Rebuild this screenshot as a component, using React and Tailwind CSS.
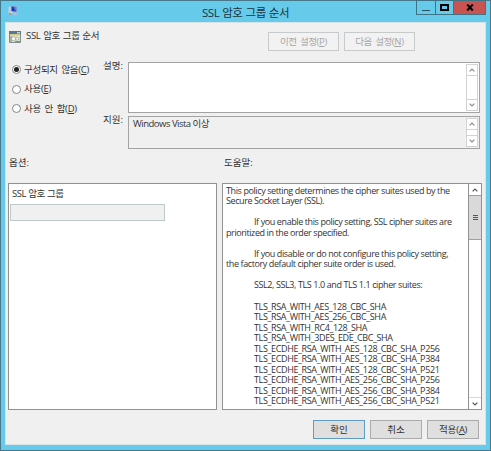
import clsx from 'clsx';

const suites = [
  'TLS_RSA_WITH_AES_128_CBC_SHA',
  'TLS_RSA_WITH_AES_256_CBC_SHA',
  'TLS_RSA_WITH_RC4_128_SHA',
  'TLS_RSA_WITH_3DES_EDE_CBC_SHA',
  'TLS_ECDHE_RSA_WITH_AES_128_CBC_SHA_P256',
  'TLS_ECDHE_RSA_WITH_AES_128_CBC_SHA_P384',
  'TLS_ECDHE_RSA_WITH_AES_128_CBC_SHA_P521',
  'TLS_ECDHE_RSA_WITH_AES_256_CBC_SHA_P256',
  'TLS_ECDHE_RSA_WITH_AES_256_CBC_SHA_P384',
  'TLS_ECDHE_RSA_WITH_AES_256_CBC_SHA_P521'
];

const Chevron = ({ down, muted }) => (
  <svg viewBox="0 0 6 4" className={clsx('h-1 w-1.5', down && 'rotate-180')}>
    <path d="M.6 3.4 3 1l2.4 2.4" fill="none" stroke={muted ? '#8c8c8c' : '#555'} strokeWidth="1.2" />
  </svg>
);

const Key = ({ children }) => (
  <span className="tracking-[-0.3px]">
    (<span className="underline underline-offset-1">{children}</span>)
  </span>
);

const MiniScroll = () => (
  <div className="flex w-3 flex-col justify-between border border-[#d2d2d2] bg-white">
    <span className="flex h-[11px] items-center justify-center border-b border-[#d2d2d2]">
      <Chevron muted />
    </span>
    <span className="flex h-[11px] items-center justify-center border-t border-[#d2d2d2]">
      <Chevron down muted />
    </span>
  </div>
);

const Radio = ({ checked, label, hotkey }) => (
  <label className="flex h-[19.5px] items-center">
    <span className="mr-[3px] flex size-[9px] items-center justify-center rounded-full border border-[#858585] bg-white">
      {checked && <span className="size-[5px] rounded-full bg-[#222]" />}
    </span>
    <span className="tracking-[-0.3px] [word-spacing:1.5px]">
      {label}
      <Key>{hotkey}</Key>
    </span>
  </label>
);

const Button = ({ children, primary }) => (
  <button
    type="button"
    className={clsx(
      'flex h-[19px] w-[52px] items-center justify-center border bg-[#dfdfdf]',
      primary ? 'border-[#5f9cc5]' : 'border-[#aaaaaa]'
    )}
  >
    {children}
  </button>
);

const NavButton = ({ children }) => (
  <button
    type="button"
    disabled
    className="flex h-[19px] w-[71px] items-center justify-center border border-[#c6cacb] bg-[#f2f2f2] tracking-[-0.5px] text-[#a7a7a7] [word-spacing:1.5px]"
  >
    <span>{children}</span>
  </button>
);

const AppIcon = () => (
  <svg viewBox="0 0 12 12" className="size-3">
    <path d="M1.5 1.5h3v5h-3z" fill="#c3cbe0" />
    <path d="M4 .8 10 1v6.5L4 6.8z" fill="#9cafd5" />
    <path d="M4.6 1.4 9.2 2v4.6l-4.6-.6z" fill="#1637ad" />
    <path d="m6.4 2 1.6 3.6 1.2.4V2z" fill="#4c83d8" />
    <path d="m1.5 6 4.5 1-2 3-2.5-1z" fill="#d6cdca" />
    <path d="m5 8.6 3-1.3 3 2-3 1.5z" fill="#b0bdd2" />
    <path d="M2 8.7 4.5 9.2" stroke="#826879" />
  </svg>
);

const PolicyIcon = () => (
  <svg viewBox="0 0 12 12" className="size-3">
    <path d="M.5.5h11v11H.5z" fill="#e4e6d6" stroke="#7e8f8d" />
    <path d="M0 0h12v3H0z" fill="#527c92" />
    <path d="M8 1h3v1.5H8z" fill="#c3d6dc" />
    <path d="M1 3h10v1.5H1z" fill="#d6c889" />
    <path d="M1 5h2v6H1z" fill="#a5b6a5" />
    <circle cx="4.5" cy="7.8" r="2.1" fill="#f8f8f1" stroke="#9b9d82" strokeWidth=".7" />
    <circle cx="8.3" cy="7.6" r="1.6" fill="#f4f3e9" stroke="#9ea383" strokeWidth=".7" />
    <path d="M6 10.5h5" stroke="#7c9589" />
  </svg>
);

const TitleBar = () => (
  <header className="relative flex h-[21px] items-center justify-center">
    <div className="absolute top-1 left-1.5">
      <AppIcon />
    </div>
    <h1 className="mt-0.5 text-[11.5px] tracking-[-0.45px] text-[#17343f] [word-spacing:0.5px]">SSL 암호 그룹 순서</h1>
    <div className="absolute -top-px right-1 flex h-[15px] border border-[#3e7285]">
      <span className="flex w-[19px] justify-center border-r border-[#3e7285] pt-[9px]">
        <span className="h-px w-2 bg-[#28505e]" />
      </span>
      <span className="flex w-[18px] justify-center border-r border-[#3e7285] pt-[3px]">
        <span className="h-[7px] w-[9px] border-2 border-black" />
      </span>
      <span className="flex w-[31px] items-center justify-center bg-[#c75450]">
        <svg viewBox="0 0 8 7" className="h-[7px] w-2">
          <path d="m1.2.5 5.6 6M6.8.5l-5.6 6" stroke="#000" strokeWidth="2" />
        </svg>
      </span>
    </div>
  </header>
);

const HelpText = () => (
  <div className="min-w-0 flex-1 pt-[1.5px] pl-[3px] text-[9px] leading-[10.55px] tracking-[-0.4px] whitespace-nowrap">
    <p>This policy setting determines the cipher suites used by the</p>
    <p>Secure Socket Layer (SSL).</p>
    <p className="mt-[10.55px] indent-7">If you enable this policy setting, SSL cipher suites are</p>
    <p>prioritized in the order specified.</p>
    <p className="mt-[10.55px] indent-7">If you disable or do not configure this policy setting,</p>
    <p>the factory default cipher suite order is used.</p>
    <p className="mt-[10.55px] indent-7">SSL2, SSL3, TLS 1.0 and TLS 1.1 cipher suites:</p>
    <ul className="mt-[10.55px] pl-7 tracking-[-0.37px]">
      {suites.map((suite) => (
        <li key={suite}>{suite}</li>
      ))}
    </ul>
  </div>
);

const App = () => (
  <div className="h-[451px] w-[491px] border border-[#47798b] bg-[#66caea] font-['Open_Sans','Noto_Sans_CJK_KR',sans-serif] text-[9.5px] leading-3 text-[#333]">
    <TitleBar />
    <main className="ml-1 h-[423px] w-[481px] border border-[#d7e3e7] bg-[#f0f0f0]">
      <div className="flex h-[39px] pt-2 pl-[3px]">
        <PolicyIcon />
        <span className="-mt-px ml-[5px] w-[242px] tracking-[-0.3px] [word-spacing:0.5px]">SSL 암호 그룹 순서</span>
        <div className="flex gap-[5px] pt-px">
          <NavButton>
            이전 설정<Key>P</Key>
          </NavButton>
          <NavButton>
            다음 설정<Key>N</Key>
          </NavButton>
        </div>
      </div>

      <div className="flex h-[87px]">
        <div className="-mt-[2px] w-[97px] pl-1.5">
          <Radio checked label="구성되지 않음" hotkey="C" />
          <Radio label="사용" hotkey="E" />
          <Radio label="사용 안 함" hotkey="D" />
        </div>
        <div className="grid grid-cols-[25px_352px] grid-rows-[51px_33px] gap-y-[3px]">
          <span className="-mt-0.5">설명:</span>
          <div className="flex justify-end border border-[#a3a3a3] bg-white p-px">
            <MiniScroll />
          </div>
          <span className="-mt-0.5">지원:</span>
          <div className="flex justify-between border border-[#a3a3a3] p-px">
            <span className="pl-[3px] tracking-[-0.5px]">Windows Vista 이상</span>
            <MiniScroll />
          </div>
        </div>
      </div>

      <div className="flex h-[34px] pt-2 pl-[3px]">
        <span className="w-[215px]">옵션:</span>
        <span>도움말:</span>
      </div>

      <div className="flex h-[227px] gap-[5px] pl-0.5">
        <section className="w-[209px] border border-[#929292] bg-white px-px pt-1">
          <p className="pl-0.5 tracking-[-0.4px]">SSL 암호 그룹</p>
          <div className="mt-1 h-[17px] w-[155px] border border-[#bfc8cb] bg-[#f0f0f0]" />
        </section>
        <section className="flex w-[260px] border border-[#929292] bg-white">
          <HelpText />
          <div className="flex w-[13px] flex-col border-l border-[#929292]">
            <span className="flex h-[11px] items-center justify-center">
              <Chevron />
            </span>
            <span className="flex h-[45px] flex-col items-center justify-center gap-px border-y border-[#a0a0a0] bg-[#d9d9d9]">
              <i className="h-px w-[5px] bg-[#555]" />
              <i className="h-px w-[5px] bg-[#555]" />
              <i className="h-px w-[5px] bg-[#555]" />
            </span>
            <span className="mt-auto flex h-3 items-center justify-center border-t border-[#d9d9d9]">
              <Chevron down />
            </span>
          </div>
        </section>
      </div>

      <footer className="flex justify-end gap-[5px] pt-2.5 pr-1.5">
        <Button primary>확인</Button>
        <Button>취소</Button>
        <Button>
          적용<Key>A</Key>
        </Button>
      </footer>
    </main>
  </div>
);

export default App;
